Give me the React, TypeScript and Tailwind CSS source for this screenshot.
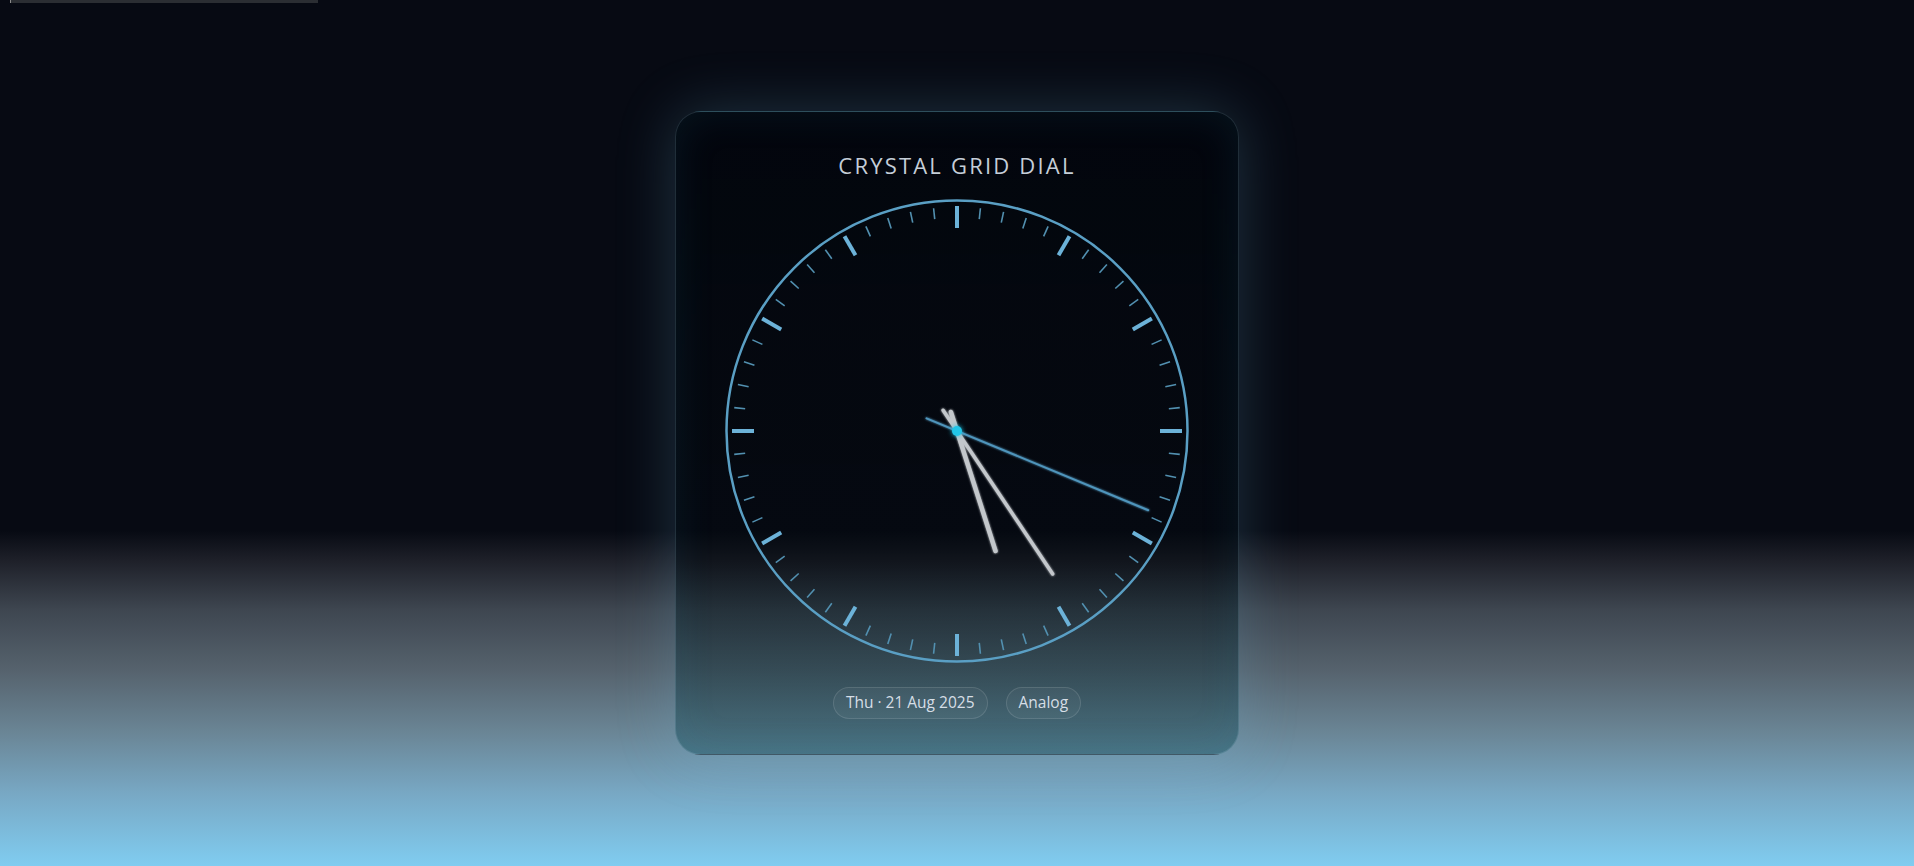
import React from 'react'

const CX = 235
const CY = 235

// static reading taken from the reference: 5:24:18
const HOUR_ANGLE = 162.2
const MINUTE_ANGLE = 146.2
const SECOND_ANGLE = 112.5

function polar(angle: number, r: number) {
  const rad = (angle * Math.PI) / 180
  return { x: CX + Math.sin(rad) * r, y: CY - Math.cos(rad) * r }
}

function Hand({ angle, length, tail, width, color }: { angle: number; length: number; tail: number; width: number; color: string }) {
  const a = polar(angle, -tail)
  const b = polar(angle, length)
  return <line x1={a.x} y1={a.y} x2={b.x} y2={b.y} stroke={color} strokeWidth={width} strokeLinecap="round" />
}

function Dial() {
  const ticks = Array.from({ length: 60 }, (_, i) => i)
  return (
    <svg width="470" height="470" viewBox="0 0 470 470" className="block">
      <defs>
        <filter id="glow" x="-50%" y="-50%" width="200%" height="200%">
          <feGaussianBlur stdDeviation="1.2" result="b" />
          <feMerge>
            <feMergeNode in="b" />
            <feMergeNode in="SourceGraphic" />
          </feMerge>
        </filter>
        <filter id="dotGlow" x="-200%" y="-200%" width="500%" height="500%">
          <feGaussianBlur stdDeviation="2.5" result="b" />
          <feMerge>
            <feMergeNode in="b" />
            <feMergeNode in="SourceGraphic" />
          </feMerge>
        </filter>
      </defs>

      {/* ring */}
      <circle cx={CX} cy={CY} r="230.5" fill="none" stroke="#5a9fc4" strokeWidth="2.5" />

      {/* ticks */}
      {ticks.map(i => {
        const major = i % 5 === 0
        const a = polar(i * 6, major ? 225 : 224)
        const b = polar(i * 6, major ? 203 : 213)
        return (
          <line
            key={i}
            x1={a.x}
            y1={a.y}
            x2={b.x}
            y2={b.y}
            stroke={major ? '#6cb2d8' : '#5290b0'}
            strokeWidth={major ? 4 : 1.6}
          />
        )
      })}

      {/* hands */}
      <g filter="url(#glow)">
        <Hand angle={HOUR_ANGLE} length={126} tail={20} width={4.5} color="#c3c7cb" />
        <Hand angle={MINUTE_ANGLE} length={172} tail={25} width={3.5} color="#c3c7cb" />
        <Hand angle={SECOND_ANGLE} length={207} tail={33} width={2} color="#4f95bc" />
      </g>
      <circle cx={CX} cy={CY} r="5" fill="#22c6e8" filter="url(#dotGlow)" />
    </svg>
  )
}

export default function App() {
  return (
    <div className="relative min-h-screen w-full flex items-center justify-center bg-[linear-gradient(180deg,#070a13_0%,#070a13_61.3%,#1e2029_64.7%,#3e4650_70.4%,#56636e_77.5%,#6a8595_84.5%,#78a8c4_91.6%,#80ccf0_100%)] font-['Open_Sans',sans-serif]">
      {/* thin bar at the very top */}
      <div className="absolute top-0 left-[10px] h-[3px] w-[308px] bg-[#2b2e33] border-l border-[#8a8a8a]" />

      {/* Card */}
      <div className="w-[564px] h-[644px] rounded-[26px] border border-[rgba(150,205,230,0.2)] bg-[linear-gradient(180deg,rgba(1,4,10,0.62)_0%,rgba(4,10,16,0.5)_70%,rgba(35,85,98,0.5)_100%)] shadow-[0_0_60px_rgba(120,195,230,0.22),inset_0_0_40px_rgba(40,140,170,0.12)] flex flex-col items-center pt-[39px]">
        <h1 className="h-[28px] text-[22px] leading-[28px] tracking-[0.1em] text-[#c5ced8] font-normal">
          CRYSTAL GRID DIAL
        </h1>

        <div className="mt-[17px]">
          <Dial />
        </div>

        {/* Pills */}
        <div className="mt-[21px] flex items-center gap-[18px]">
          <span className="h-[32px] px-[12px] flex items-center rounded-full border border-[rgba(255,255,255,0.12)] bg-[rgba(255,255,255,0.04)] text-[15.5px] text-[#d6dee6]">
            Thu · 21 Aug 2025
          </span>
          <span className="h-[32px] px-[12px] flex items-center rounded-full border border-[rgba(255,255,255,0.12)] bg-[rgba(255,255,255,0.04)] text-[15.5px] text-[#d6dee6]">
            Analog
          </span>
        </div>
      </div>
    </div>
  )
}
